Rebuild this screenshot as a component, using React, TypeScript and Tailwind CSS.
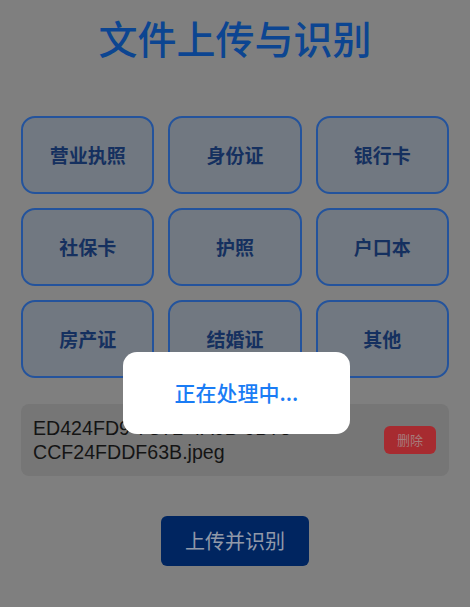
const cjk = { fontFamily: '"Noto Sans CJK SC", "Noto Sans", sans-serif' };
const latin = { fontFamily: '"Liberation Sans", "Noto Sans CJK SC", sans-serif' };

const docTypes = ["营业执照", "身份证", "银行卡", "社保卡", "护照", "户口本", "房产证", "结婚证", "其他"];

export default function App() {
  return (
    <div className="relative w-[470px] h-[607px] overflow-hidden bg-[#b7b7b7]" style={cjk}>
      <div className="flex flex-col items-center px-[21px]">
        <h1 className="mt-[14px] h-[46px] leading-[46px] text-[39px] font-medium text-[#1264d0]">文件上传与识别</h1>

        <div className="mt-[56px] grid w-full grid-cols-3 gap-[14px]">
          {docTypes.map((t) => (
            <div
              key={t}
              className="flex h-[78px] items-center justify-center rounded-[14px] border-2 border-[#3478e0] bg-[#a2adb9] text-[19px] font-bold text-[#1f4588]"
            >
              {t}
            </div>
          ))}
        </div>

        <div className="mt-[26px] flex h-[72px] w-full items-center gap-3 rounded-lg bg-[#a9a9a9] pl-3 pr-[13px]">
          <p className="flex-1 break-words text-[19.6px] leading-[24px] text-[#1e1e1e]" style={latin}>
            ED424FD9-7C72-4A0B-9D75-CCF24FDDF63B.jpeg
          </p>
          <button className="h-[28px] w-[52px] rounded-md bg-[#f03e45] text-[13px] text-[#eeb0b0]" style={cjk}>
            删除
          </button>
        </div>

        <button className="mt-[40px] h-[50px] w-[148px] rounded-md bg-[#00368a] text-[20px] text-[#d0dcf2]" style={cjk}>
          上传并识别
        </button>
      </div>

      {/* loading overlay */}
      <div className="absolute inset-0 bg-black/30" />
      <div className="absolute left-[123px] top-[352px] flex h-[82px] w-[227px] items-center justify-center rounded-[14px] bg-white">
        <span className="text-[21px] font-medium text-[#1a7cf5]">正在处理中...</span>
      </div>
    </div>
  );
}
